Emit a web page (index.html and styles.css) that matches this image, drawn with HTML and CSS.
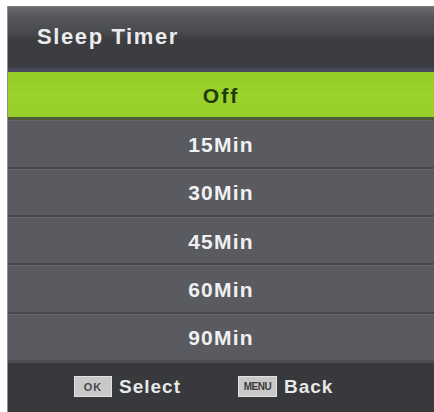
FILE: index.html
```html
<!DOCTYPE html>
<html lang="en">
<head>
    <meta charset="UTF-8">
    <meta name="viewport" content="width=device-width, initial-scale=1.0">
    <title>Sleep Timer</title>
    <link rel="stylesheet" href="styles.css">
</head>
<body>
    <div class="panel">
        <div class="header">
            <span class="header-title">Sleep Timer</span>
        </div>
        <div class="options">
            <div class="option selected">Off</div>
            <div class="option">15Min</div>
            <div class="option">30Min</div>
            <div class="option">45Min</div>
            <div class="option">60Min</div>
            <div class="option">90Min</div>
        </div>
        <div class="footer">
            <div class="hint">
                <span class="key">OK</span>
                <span class="hint-label">Select</span>
            </div>
            <div class="hint">
                <span class="key key-menu">MENU</span>
                <span class="hint-label">Back</span>
            </div>
        </div>
    </div>
</body>
</html>
```

FILE: styles.css
```css
* {
    margin: 0;
    padding: 0;
    box-sizing: border-box;
}

html, body {
    height: 100%;
}

body {
    background: #FFFFFF;
    font-family: "Liberation Sans", Arial, sans-serif;
    padding: 6px 0 0 7px;
    overflow: hidden;
}

.panel {
    height: 406px;
    display: flex;
    flex-direction: column;
    background: #585a5f;
    border-left: 1px solid #8a8c90;
}

.header {
    height: 66px;
    display: flex;
    align-items: center;
    padding: 0 0 6px 29px;
    background: linear-gradient(180deg, #6a6c70 0%, #56585c 14%, #47494d 40%, #3b3d41 50%, #3a3c40 92%, #44455a 94%, #4b4c5c 100%);
    border-top: 1px solid #7a7c80;
}

.header-title {
    color: #ececec;
    font-size: 22px;
    font-weight: 700;
    letter-spacing: 1.6px;
}

.options {
    flex: 1;
    display: flex;
    flex-direction: column;
}

.option {
    flex: 1;
    display: flex;
    align-items: center;
    justify-content: center;
    color: #f0f0f0;
    font-size: 21px;
    font-weight: 700;
    letter-spacing: 1.2px;
    padding-top: 2px;
    background: #595b60;
    border-top: 1px solid #65676b;
    border-bottom: 2px solid #45474b;
}

.option:last-child {
    border-bottom: 3px solid #4c4e52;
}

.option.selected {
    background: linear-gradient(180deg, #93cc24 0%, #9bd22b 50%, #96ce27 100%);
    color: #1f3a0c;
    border-top: none;
    border-bottom: 3px solid #4e5a38;
    letter-spacing: 2px;
}

.footer {
    height: 49px;
    display: flex;
    align-items: center;
    padding: 0 0 2px 66px;
    gap: 57px;
    background: #37393c;
}

.hint {
    display: flex;
    align-items: center;
    gap: 7px;
}

.key {
    width: 38px;
    height: 21px;
    display: flex;
    align-items: center;
    justify-content: center;
    background: #c9c9c9;
    border: 1px solid #e2e2e2;
    color: #4a4a4a;
    font-size: 11px;
    font-weight: 700;
    letter-spacing: 1px;
}

.key-menu {
    width: 39px;
    font-size: 10px;
    letter-spacing: -0.5px;
    color: #3c3c3c;
}

.hint-label {
    color: #e8e8e8;
    font-size: 19px;
    font-weight: 700;
    letter-spacing: 1px;
}
```
